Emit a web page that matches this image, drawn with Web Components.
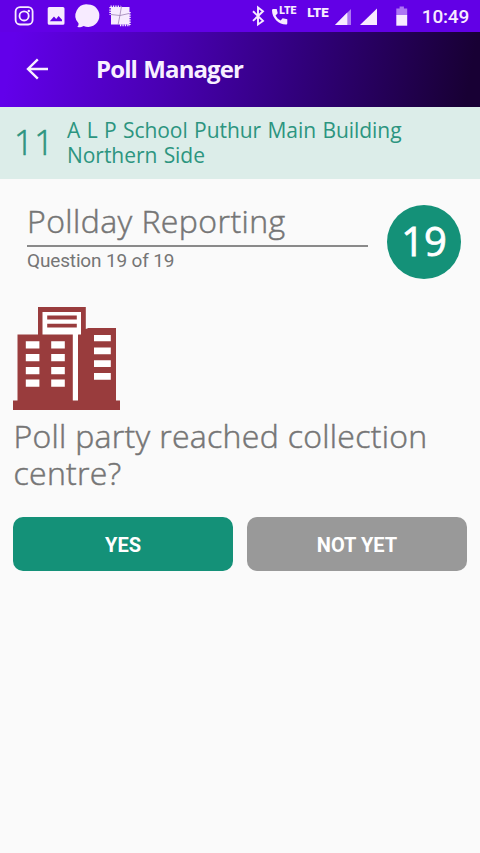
<!DOCTYPE html>
<html lang="en">
<head>
<meta charset="utf-8">
<title>Poll Manager</title>
<style>
  body {
    margin: 0;
    min-height: 853px;
    background: #fafafa;
    font-family: 'Open Sans', 'Noto Sans', sans-serif;
    color: #757575;
    overflow: hidden;
    --accent: #149178;
    --humanist: 'Open Sans', 'Noto Sans', sans-serif;
    --system: Roboto, 'Noto Sans', sans-serif;
  }
</style>
</head>
<body>
<status-bar time="10:49"></status-bar>
<app-bar>Poll Manager</app-bar>
<station-banner number="11">A L P School Puthur Main Building Northern Side</station-banner>
<poll-question number="19" total="19" section="Pollday Reporting">
  <building-icon slot="icon"></building-icon>
  Poll party reached collection centre?
  <answer-button slot="answers" primary>YES</answer-button>
  <answer-button slot="answers">NOT YET</answer-button>
</poll-question>

<script>
class StatusBar extends HTMLElement {
  constructor() {
    super();
    this.attachShadow({ mode: 'open' });
  }

  connectedCallback() {
    this.shadowRoot.innerHTML = `
      <style>
        :host {
          display: flex;
          justify-content: space-between;
          height: 32px;
          background: #6200e6;
          color: #f7ebff;
          font-family: var(--system);
        }
        svg { display: block; fill: currentColor; }
        .time {
          margin-right: 11px;
          font-size: 19px;
          font-weight: 500;
          line-height: 33px;
          letter-spacing: -0.2px;
        }
        .right { display: flex; }
        text { font-family: Roboto, sans-serif; font-weight: 900; }
      </style>
      <svg class="left" width="140" height="32" viewBox="0 0 140 32">
        <rect x="15.6" y="7.1" width="17" height="17.4" rx="4.4" fill="none" stroke="currentColor" stroke-width="1.8"/>
        <circle cx="24.1" cy="15.9" r="4.6" fill="none" stroke="currentColor" stroke-width="1.8"/>
        <circle cx="28.8" cy="11" r="1.2"/>
        <path fill-rule="evenodd" d="M49.3 7h13.6a1.6 1.6 0 0 1 1.6 1.6v14.6a1.6 1.6 0 0 1-1.6 1.6H49.3a1.6 1.6 0 0 1-1.6-1.6V8.6a1.6 1.6 0 0 1 1.6-1.6zM49.8 21.3h12.2v-1.6l-3.4-3.8-2.4 3-2.2-2.300z"/>
        <path d="M88.2 4.5a11.2 11.2 0 1 1-4.6 21.4c-1.7 1-3.8 1.5-6.4 1.2 1-1 1.5-2.2 1.3-3.800A11.200 11.200 0 0 1 88.200 4.500z"/>
        <rect x="111" y="7" width="18.500" height="17.500"/>
        <path fill="none" stroke="currentColor" stroke-width="2" stroke-dasharray="1.300 1.100" d="M110.500 6.600h10M110.300 7v8M129.700 12v13M120 25.200h10"/>
        <path fill="none" stroke="#9d83b4" stroke-width=".8" d="M121.500 6l-1.500 9-2 10M111 14.500l9 1 9-2"/>
      </svg>
      <div class="right">
        <svg width="182" height="32" viewBox="240 0 182 32">
          <path fill="none" stroke="currentColor" stroke-width="1.900" d="M253 11.300l10 9.600-5 3.600V7.400l5 3.900-10 9.600"/>
          <path d="M273.400 9h3.300l1 4.200-2.100 2.200c1 2.200 2.700 3.900 5 5l2.100-2.100 4.600 1v3.900c0 .8-.5 1.300-1.300 1.300C279 24.500 272 18 272 10.400c0-.8.500-1.400 1.400-1.400z"/>
          <text x="279.300" y="14.300" font-size="10.200" textLength="17" lengthAdjust="spacingAndGlyphs">LTE</text>
          <text x="307.200" y="16.600" font-size="13" textLength="21.500" lengthAdjust="spacingAndGlyphs">LTE</text>
          <path d="M335 25L351 9v16z" opacity=".5"/>
          <path d="M335 25l12.300-12.500V25z"/>
          <path d="M360 25L377 8.500V25z"/>
          <path d="M396.300 8.500h3.300V6.600h4.300v1.900h3.300v6.700h-10.900z" opacity=".5"/>
          <path d="M396.300 15h10.900v10.700h-10.900z"/>
        </svg>
        <span class="time">${this.getAttribute('time')}</span>
      </div>
    `;
  }
}

class AppBar extends HTMLElement {
  constructor() {
    super();
    this.attachShadow({ mode: 'open' });
    this.shadowRoot.innerHTML = `
      <style>
        :host {
          display: flex;
          align-items: center;
          height: 74.5px;
          background: linear-gradient(100deg, #6200ea 3%, #4a00b4 34%, #31007c 62%, #180034 97%);
          color: #f8f0ff;
        }
        svg { margin: 0 47px 0 26px; flex: none; }
        .title {
          font: 700 24px/32px var(--humanist);
          letter-spacing: -0.9px;
          word-spacing: 1px;
        }
      </style>
      <svg width="23" height="22" viewBox="0 0 23 22" fill="none" stroke="currentColor" stroke-width="2.400">
        <path d="M22 11H2.500M11.800 1.300L2 11l9.800 9.700"/>
      </svg>
      <span class="title"><slot></slot></span>
    `;
  }
}

class StationBanner extends HTMLElement {
  constructor() {
    super();
    this.attachShadow({ mode: 'open' });
  }

  connectedCallback() {
    this.shadowRoot.innerHTML = `
      <style>
        :host {
          display: flex;
          align-items: center;
          box-sizing: border-box;
          height: 72.5px;
          padding-left: 14px;
          background: #dcede9;
          color: #2c9580;
        }
        .number {
          width: 53px;
          margin-top: -2px;
          font-size: 34px;
          font-weight: 300;
          line-height: 48px;
          letter-spacing: 0.8px;
          -webkit-text-stroke: 0.6px currentColor;
        }
        .name {
          width: 350px;
          font-size: 21px;
          line-height: 24.5px;
          letter-spacing: -0.05px;
          word-spacing: 1px;
        }
      </style>
      <span class="number">${this.getAttribute('number')}</span>
      <span class="name"><slot></slot></span>
    `;
  }
}

class BuildingIcon extends HTMLElement {
  constructor() {
    super();
    this.attachShadow({ mode: 'open' });
    this.shadowRoot.innerHTML = `
      <style>
        :host { display: block; width: 107px; height: 103px; }
        svg { display: block; }
      </style>
      <svg width="107" height="103" viewBox="13 307 107 103">
        <g fill="#993c3d">
          <path d="M38 307h47.800v22l2.600-1H116v72.500h4V410H13v-9.500h4.500v-66H38z"/>
        </g>
        <g fill="#fff">
          <path d="M42.500 312h38.500v22.500H42.500zM72.800 333H81l-3 1.800v65.700h-5.200z"/>
          <path d="M25.800 341.200h13.600v7.300H25.800zM25.800 354h13.600v7.300H25.800zM25.800 367h13.600v7.300H25.800zM25.800 379.500h13.600v7.300H25.800z"/>
          <path d="M51.200 341.200h13.600v7.300H51.200zM51.200 354h13.600v7.300H51.200zM51.200 367h13.600v7.300H51.200zM51.200 379.500h13.600v7.300H51.200z"/>
          <path d="M94 335h16.800v6.200H94zM94 347.500h16.800v6.700H94zM94 360.300h16.800v6.700H94zM94 373h16.800v6.800H94z"/>
        </g>
        <path fill="#993c3d" d="M47.200 315.500h29.600v4H47.200zM47.200 323.700h29.600v3.700H47.200z"/>
      </svg>
    `;
  }
}

class AnswerButton extends HTMLElement {
  constructor() {
    super();
    this.attachShadow({ mode: 'open' });
    this.shadowRoot.innerHTML = `
      <style>
        :host { display: block; flex: 1; }
        button {
          display: block;
          width: 100%;
          height: 54px;
          padding: 0;
          border: 0;
          border-radius: 10px;
          background: #999;
          color: #fff;
          font: 700 20px/56px var(--system);
        }
        :host([primary]) button { background: var(--accent); }
      </style>
      <button><slot></slot></button>
    `;
  }
}

class PollQuestion extends HTMLElement {
  constructor() {
    super();
    this.attachShadow({ mode: 'open' });
  }

  connectedCallback() {
    const number = this.getAttribute('number');
    this.shadowRoot.innerHTML = `
      <style>
        :host { display: block; padding: 26px 13px 0; }
        header {
          display: flex;
          justify-content: space-between;
          height: 101.5px;
          padding: 0 6px 0 14px;
        }
        .heading { width: 341px; }
        h1 {
          margin: 0;
          height: 39.5px;
          border-bottom: 2px solid #8a8a8a;
          font-size: 32px;
          font-weight: 300;
          line-height: 31px;
          letter-spacing: 0.43px;
          white-space: nowrap;
          -webkit-text-stroke: 0.5px currentColor;
        }
        .progress {
          font: 400 19px/27px var(--system);
          letter-spacing: -0.15px;
          white-space: nowrap;
        }
        .badge {
          width: 74px;
          height: 74px;
          border-radius: 50%;
          background: var(--accent);
          color: #fff;
          font-size: 40px;
          line-height: 71px;
          text-align: center;
          -webkit-text-stroke: 0.8px currentColor;
        }
        .text {
          margin: 7px 0 0 0.5px;
          font-size: 32px;
          font-weight: 300;
          line-height: 37px;
          letter-spacing: 0.3px;
          -webkit-text-stroke: 0.5px currentColor;
        }
        .answers {
          display: flex;
          gap: 14px;
          margin-top: 26px;
        }
      </style>
      <header>
        <div class="heading">
          <h1>${this.getAttribute('section')}</h1>
          <div class="progress">Question ${number} of ${this.getAttribute('total')}</div>
        </div>
        <div class="badge">${number}</div>
      </header>
      <slot name="icon"></slot>
      <div class="text"><slot></slot></div>
      <div class="answers"><slot name="answers"></slot></div>
    `;
  }
}

customElements.define('status-bar', StatusBar);
customElements.define('app-bar', AppBar);
customElements.define('station-banner', StationBanner);
customElements.define('building-icon', BuildingIcon);
customElements.define('answer-button', AnswerButton);
customElements.define('poll-question', PollQuestion);
</script>
</body>
</html>
